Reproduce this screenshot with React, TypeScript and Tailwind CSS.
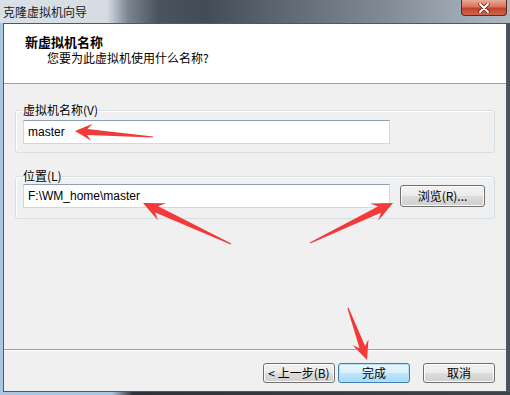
import React from 'react';

type Pt = [number, number];

function arrowPoints(tail: Pt, tip: Pt, headLen: number, headW: number, neckW: number) {
  const dx = tip[0] - tail[0];
  const dy = tip[1] - tail[1];
  const len = Math.hypot(dx, dy);
  const ux = dx / len;
  const uy = dy / len;
  const nx = -uy;
  const ny = ux;
  const base: Pt = [tip[0] - ux * headLen, tip[1] - uy * headLen];
  const neck: Pt = [tip[0] - ux * headLen * 0.72, tip[1] - uy * headLen * 0.72];
  const pts: Pt[] = [
    [tail[0] + nx * 0.6, tail[1] + ny * 0.6],
    [neck[0] + nx * neckW, neck[1] + ny * neckW],
    [base[0] + nx * headW, base[1] + ny * headW],
    tip,
    [base[0] - nx * headW, base[1] - ny * headW],
    [neck[0] - nx * neckW, neck[1] - ny * neckW],
    [tail[0] - nx * 0.6, tail[1] - ny * 0.6],
  ];
  return pts.map((p) => `${p[0].toFixed(1)},${p[1].toFixed(1)}`).join(' ');
}

const arrows: { tail: Pt; tip: Pt; head: number; w: number; neck: number }[] = [
  { tail: [153, 137], tip: [75, 131], head: 17, w: 8.5, neck: 3 },
  { tail: [231, 244], tip: [143, 203], head: 21, w: 9.5, neck: 3.5 },
  { tail: [310, 243], tip: [393, 203], head: 21, w: 9.5, neck: 3.5 },
  { tail: [348, 308], tip: [367, 360], head: 19, w: 8.5, neck: 3 },
];

function WinButton({ children, primary, className = '' }: { children: React.ReactNode; primary?: boolean; className?: string }) {
  return (
    <div
      className={`flex items-center justify-center rounded-[3px] border text-[12px] leading-none text-black ${
        primary
          ? 'border-[#3c7fb1] bg-[linear-gradient(#eaf6fd_0%,#d9f0fc_50%,#bee6fd_51%,#a7d9f5_100%)] shadow-[inset_0_0_0_1px_#b8e1f8]'
          : 'border-[#707070] bg-[linear-gradient(#f2f2f2_0%,#ebebeb_50%,#dddddd_51%,#cfcfcf_100%)] shadow-[inset_0_0_0_1px_#fcfcfc]'
      } ${className}`}
    >
      {children}
    </div>
  );
}

export default function App() {
  return (
    <div className="relative flex h-[395px] w-[510px] flex-col overflow-hidden font-['Microsoft_YaHei','Noto_Sans_CJK_SC',sans-serif] text-black">
      {/* Title bar */}
      <div className="relative flex h-[23px] shrink-0 items-center bg-[linear-gradient(to_right,#d9e0e8_0%,#d5dce4_21%,#7d8792_25%,#4a545e_31%,#424c56_40%,#5d6772_55%,#7f8a95_75%,#9ea8b2_90%,#aeb8c1_100%)] pl-[3px]">
        <span className="text-[12px] leading-none text-[#1a1a1a]">克隆虚拟机向导</span>
        <div className="absolute right-[3px] top-0 flex h-[16px] w-[46px] items-center justify-center rounded-b-[4px] border border-t-0 border-[#5b2a22] bg-[linear-gradient(#e9a99a_0%,#d9735e_45%,#c4412b_55%,#d2654c_100%)]">
          <svg width="12" height="10" viewBox="0 0 12 10">
            <path d="M2 1 L10 9 M10 1 L2 9" stroke="#4a2018" strokeWidth="3.4" strokeLinecap="round" />
            <path d="M2 1 L10 9 M10 1 L2 9" stroke="#ffffff" strokeWidth="2" strokeLinecap="round" />
          </svg>
        </div>
      </div>

      <div className="flex flex-1">
        {/* left frame */}
        <div className="w-[3px] bg-[#a9c6e2]" />
        {/* client */}
        <div className="flex w-[504px] flex-col border border-[#4e5964] bg-[#f0f0f0]">
          {/* header */}
          <div className="h-[60px] shrink-0 border-b border-[#a0a0a0] bg-white pt-[9px]">
            <div className="pl-[21px] text-[13px] font-bold leading-[17px]">新虚拟机名称</div>
            <div className="pl-[43px] text-[12px] leading-[16px]">您要为此虚拟机使用什么名称?</div>
          </div>

          {/* body */}
          <div className="flex flex-1 flex-col pl-[11px]">
            <fieldset className="mt-[18px] w-[480px] rounded-[3px] border border-[#d5dfe5] pb-[8px] pl-[7px] shadow-[inset_1px_1px_0_#ffffff]">
              <legend className="px-0 text-[12px] leading-[16px]">虚拟机名称(V)</legend>
              <div className="mt-[2px] flex h-[24px] w-[367px] items-center border border-[#d0d9e3] border-t-[#8e9fb3] bg-white pl-[4px] font-['Liberation_Sans','Noto_Sans_CJK_SC',sans-serif] text-[12px]">
                master
              </div>
            </fieldset>

            <fieldset className="mt-[15px] w-[480px] rounded-[3px] border border-[#d5dfe5] pb-[10px] pl-[7px] shadow-[inset_1px_1px_0_#ffffff]">
              <legend className="px-0 text-[12px] leading-[16px]">位置(L)</legend>
              <div className="flex items-center gap-[10px]">
                <div className="flex h-[24px] w-[367px] items-center border border-[#d0d9e3] border-t-[#8e9fb3] bg-white pl-[4px] font-['Liberation_Sans','Noto_Sans_CJK_SC',sans-serif] text-[12px]">
                  F:\WM_home\master
                </div>
                <WinButton className="h-[22px] w-[85px]">浏览(R)...</WinButton>
              </div>
            </fieldset>
          </div>

          {/* footer */}
          <div className="flex h-[42px] shrink-0 items-start justify-end border-t border-[#a0a0a0] pr-[11px] pt-[13px] shadow-[inset_0_1px_0_#ffffff]">
            <WinButton className="h-[20px] w-[72px]">&lt; 上一步(B)</WinButton>
            <WinButton primary className="ml-[3px] h-[20px] w-[72px]">完成</WinButton>
            <WinButton className="ml-[13px] h-[20px] w-[72px]">取消</WinButton>
          </div>
        </div>
        {/* right frame */}
        <div className="w-[3px] bg-[#4a535c]" />
      </div>
      {/* bottom frame */}
      <div className="h-[3px] shrink-0 bg-[linear-gradient(to_right,#a9c6e2_0%,#a9c6e2_22%,#2c333a_26%,#3c444c_100%)]" />

      {/* annotation arrows */}
      <svg className="pointer-events-none absolute left-0 top-0" width="510" height="395" viewBox="0 0 510 395">
        {arrows.map((a, i) => (
          <polygon key={i} points={arrowPoints(a.tail, a.tip, a.head, a.w, a.neck)} fill="#f23a3a" />
        ))}
      </svg>
    </div>
  );
}
